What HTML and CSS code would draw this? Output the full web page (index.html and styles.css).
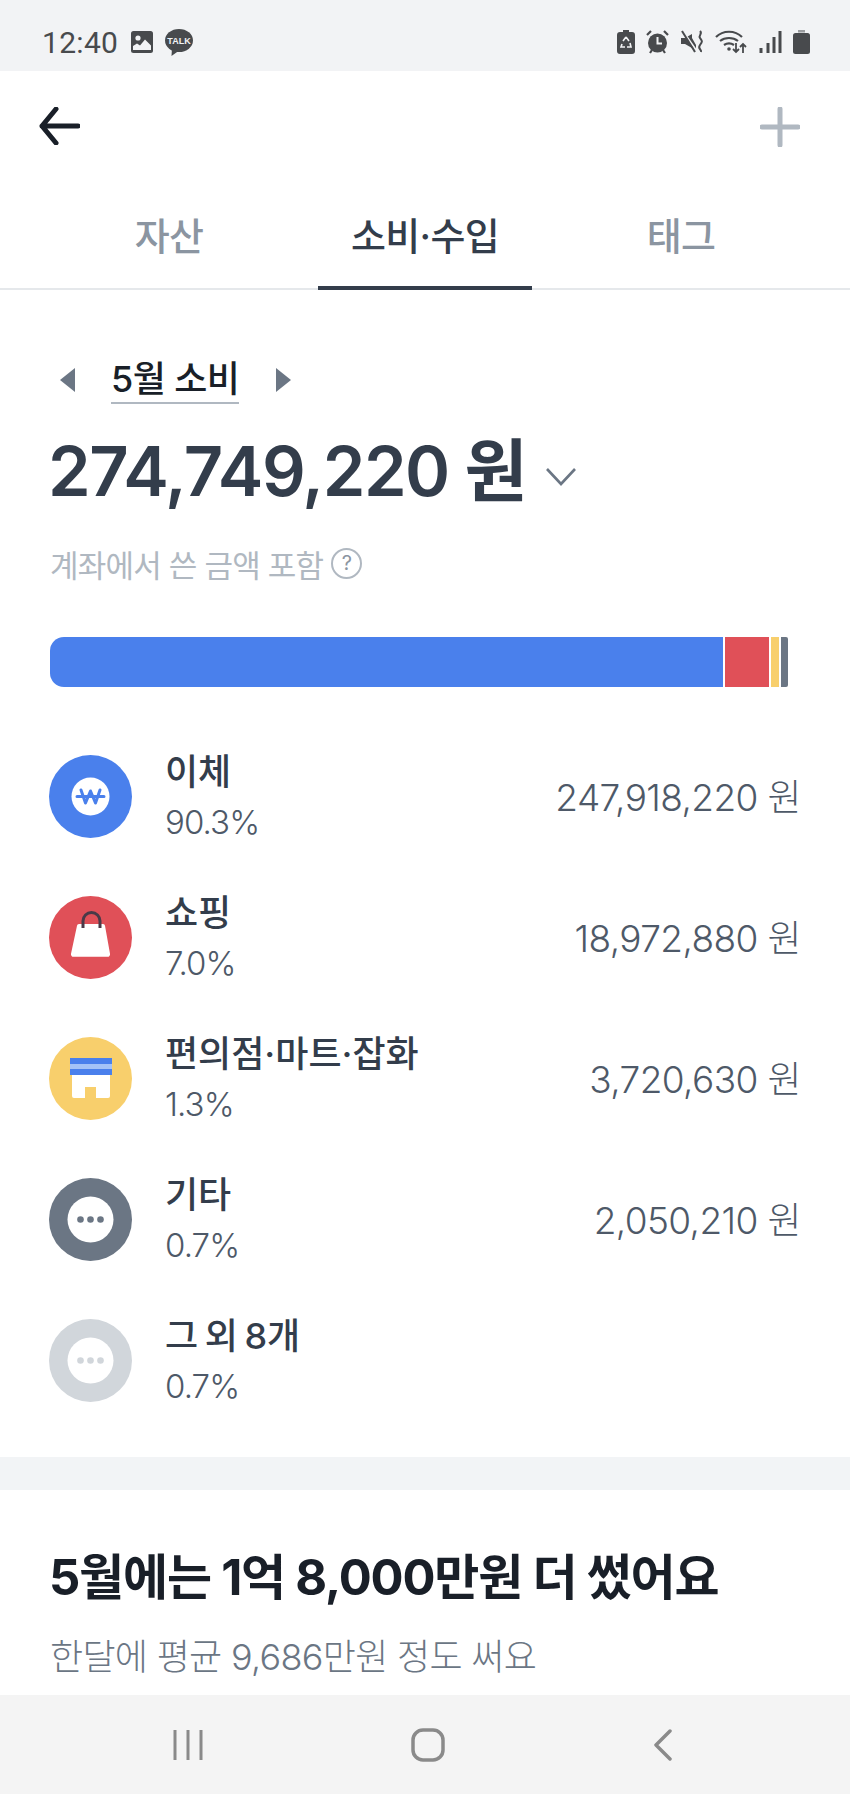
FILE: index.html
```html
<!DOCTYPE html>
<html lang="ko">
<head>
	<meta charset="UTF-8">
	<title>소비·수입</title>
	<link rel="stylesheet" href="styles.css">
</head>
<body>
	<div class="phone">
		<div class="status">
			<div class="status-left">
				<span class="clock">12:40</span>
				<svg class="ic-photo" width="22" height="22" viewBox="0 0 22 22">
					<rect width="22" height="22" rx="2.5" fill="#484a4d"/>
					<circle cx="7" cy="7" r="2.6" fill="#f2f3f5"/>
					<path d="M2 19v-4l4-2.500 3 2 5-6 6 6v4.500z" fill="#f2f3f5"/>
				</svg>
				<svg class="ic-talk" width="28" height="27" viewBox="0 0 28 27">
					<ellipse cx="14" cy="11.500" rx="14" ry="11.500" fill="#484a4d"/>
					<path d="M7 19l-.5 8 7-5z" fill="#484a4d"/>
					<text x="14" y="15" class="talk-text" text-anchor="middle">TALK</text>
				</svg>
			</div>
			<div class="status-right">
				<svg width="18" height="24" viewBox="0 0 18 24">
					<path d="M6 0h6v2h3a3 3 0 0 1 3 3v16a3 3 0 0 1-3 3H3a3 3 0 0 1-3-3V5a3 3 0 0 1 3-3h3z" fill="#484a4d"/>
					<path d="M9 7l3 4M9 7l-3 4M5 14l-1 3h4M13 13l1 4h-4" stroke="#f2f3f5" stroke-width="1.600" fill="none"/>
				</svg>
				<svg width="23" height="24" viewBox="0 0 23 24">
					<circle cx="11.500" cy="13" r="9.500" fill="#484a4d"/>
					<path d="M11.500 7v6.500h4.500" stroke="#f2f3f5" stroke-width="2" fill="none"/>
					<path d="M1 5l4-4M22 5l-4-4M4 23l2-3M19 23l-2-3" stroke="#484a4d" stroke-width="2.200"/>
				</svg>
				<svg width="23" height="24" viewBox="0 0 23 24">
					<path d="M0 8h4l7-4v4l4 7v5l-4-2-7-4H0z" fill="#484a4d"/>
					<path d="M1 0l14 20" stroke="#f2f3f5" stroke-width="2"/>
					<path d="M1 1l13 21" stroke="#484a4d" stroke-width="2"/>
					<path d="M19 1c3 3-2 4 0 7s3 3 0 7 2 4 1 7" stroke="#484a4d" stroke-width="2" fill="none"/>
				</svg>
				<svg width="32" height="24" viewBox="0 0 32 24">
					<path d="M1 7c7-7 19-7 26 0M5 11c5-4 13-4 18 0M9 15c3-2 7-2 10 0" stroke="#484a4d" stroke-width="2.200" fill="none"/>
					<circle cx="14" cy="19" r="1.800" fill="#484a4d"/>
					<path d="M21 13v9M18 19l3 3 3-3M28 23v-9M25 17l3-3 3 3" stroke="#484a4d" stroke-width="1.800" fill="none"/>
				</svg>
				<svg width="23" height="24" viewBox="0 0 23 24">
					<path d="M2 18v5M9 13v10M15 7v16M21 1v22" stroke="#484a4d" stroke-width="3"/>
				</svg>
				<svg width="17" height="24" viewBox="0 0 17 24">
					<path d="M5 0h7v2.500H5z" fill="#9a9c9f"/>
					<rect y="3" width="17" height="21" rx="2.500" fill="#484a4d"/>
				</svg>
			</div>
		</div>

		<div class="screen">
			<div class="toolbar">
				<svg class="ic-back" width="41" height="38" viewBox="0 0 41 38">
					<path d="M17 2L3 19l14 17M3 19h36" stroke="#191f28" stroke-width="5" stroke-linecap="round" stroke-linejoin="round" fill="none"/>
				</svg>
				<svg class="ic-plus" width="40" height="40" viewBox="0 0 40 40">
					<path d="M20 2v36M2 20h36" stroke="#b0b8c1" stroke-width="5" stroke-linecap="round"/>
				</svg>
			</div>
			<div class="tabs">
				<div class="tab">자산</div>
				<div class="tab active">소비·수입</div>
				<div class="tab">태그</div>
			</div>

			<div class="summary">
				<div class="month">
					<span class="tri tri-left"></span>
					<span class="month-name">5월 소비</span>
					<span class="tri tri-right"></span>
				</div>
				<div class="total">
					<span>274,749,220 원</span>
					<svg width="32" height="19" viewBox="0 0 32 19">
						<path d="M2 2l14 15L30 2" stroke="#6b7684" stroke-width="2.600" fill="none"/>
					</svg>
				</div>
				<div class="note">
					<span>계좌에서 쓴 금액 포함</span>
					<span class="help">?</span>
				</div>
				<div class="bar">
					<div class="seg seg-blue"></div>
					<div class="seg seg-red"></div>
					<div class="seg seg-yellow"></div>
					<div class="seg seg-gray"></div>
				</div>
			</div>

			<div class="list">
				<div class="row">
					<svg class="cat-icon" viewBox="0 0 83 83">
						<circle cx="41.500" cy="41.500" r="41.500" fill="#4a80ec"/>
						<circle cx="41.500" cy="41.500" r="19" fill="#fff"/>
						<path d="M28 41.500h27M32 35l4.500 13 5-12 5 12L51 35" stroke="#4a80ec" stroke-width="3" stroke-linecap="round" stroke-linejoin="round" fill="none"/>
					</svg>
					<div class="cat-text">
						<div class="cat-name">이체</div>
						<div class="cat-pct">90.3%</div>
					</div>
					<div class="cat-amount">247,918,220 원</div>
				</div>
				<div class="row">
					<svg class="cat-icon" viewBox="0 0 83 83">
						<circle cx="41.500" cy="41.500" r="41.500" fill="#e05058"/>
						<path d="M34 30v-5a8.500 8.500 0 0 1 17 0v5" stroke="#4a3a48" stroke-width="3" fill="none"/>
						<path d="M30 28h24a2 2 0 0 1 2 1.800l5 28a2.500 2.500 0 0 1-2.500 3H24.500a2.500 2.500 0 0 1-2.500-3l6-28a2 2 0 0 1 2-1.800z" fill="#fff"/>
						<path d="M34 28v4M51 28v4" stroke="#4a3a48" stroke-width="3"/>
					</svg>
					<div class="cat-text">
						<div class="cat-name">쇼핑</div>
						<div class="cat-pct">7.0%</div>
					</div>
					<div class="cat-amount">18,972,880 원</div>
				</div>
				<div class="row">
					<svg class="cat-icon" viewBox="0 0 83 83">
						<circle cx="41.500" cy="41.500" r="41.500" fill="#f8cf6c"/>
						<path d="M23 38h38v21a2 2 0 0 1-2 2H47V50H36v11H25a2 2 0 0 1-2-2z" fill="#fff"/>
						<rect x="21" y="21" width="42" height="17" fill="#4a80ec"/>
						<rect x="21" y="27" width="42" height="5" fill="#a5c3f7"/>
					</svg>
					<div class="cat-text">
						<div class="cat-name">편의점·마트·잡화</div>
						<div class="cat-pct">1.3%</div>
					</div>
					<div class="cat-amount">3,720,630 원</div>
				</div>
				<div class="row">
					<svg class="cat-icon" viewBox="0 0 83 83">
						<circle cx="41.500" cy="41.500" r="41.500" fill="#6b7684"/>
						<circle cx="41.500" cy="41.500" r="23" fill="#fff"/>
						<circle cx="31.500" cy="41.500" r="3.300" fill="#6b7684"/>
						<circle cx="41.500" cy="41.500" r="3.300" fill="#6b7684"/>
						<circle cx="51.500" cy="41.500" r="3.300" fill="#6b7684"/>
					</svg>
					<div class="cat-text">
						<div class="cat-name">기타</div>
						<div class="cat-pct">0.7%</div>
					</div>
					<div class="cat-amount">2,050,210 원</div>
				</div>
				<div class="row">
					<svg class="cat-icon" viewBox="0 0 83 83">
						<circle cx="41.500" cy="41.500" r="41.500" fill="#d1d6db"/>
						<circle cx="41.500" cy="41.500" r="23" fill="#fff"/>
						<circle cx="31.500" cy="41.500" r="3.300" fill="#d1d6db"/>
						<circle cx="41.500" cy="41.500" r="3.300" fill="#d1d6db"/>
						<circle cx="51.500" cy="41.500" r="3.300" fill="#d1d6db"/>
					</svg>
					<div class="cat-text">
						<div class="cat-name">그 외 8개</div>
						<div class="cat-pct">0.7%</div>
					</div>
				</div>
			</div>

			<div class="divider"></div>

			<div class="compare">
				<h2>5월에는 1억 8,000만원 더 썼어요</h2>
				<p>한달에 평균 9,686만원 정도 써요</p>
			</div>
		</div>

		<div class="navbar">
			<svg width="30" height="30" viewBox="0 0 30 30">
				<path d="M2 0v30M15 0v30M28 0v30" stroke="#8a8a8a" stroke-width="3"/>
			</svg>
			<svg width="34" height="34" viewBox="0 0 34 34">
				<rect x="2" y="2" width="30" height="30" rx="10" stroke="#8a8a8a" stroke-width="3.500" fill="none"/>
			</svg>
			<svg width="20" height="32" viewBox="0 0 20 32">
				<path d="M17 2L3 16l14 14" stroke="#8a8a8a" stroke-width="3.500" stroke-linecap="round" stroke-linejoin="round" fill="none"/>
			</svg>
		</div>
	</div>
</body>
</html>
```

FILE: styles.css
```css
* {
	box-sizing: border-box;
}

html, body {
	margin: 0;
	padding: 0;
	background-color: #ffffff;
}

body {
	font-family: Inter, "Noto Sans CJK KR", sans-serif;
	color: #333d4b;
}

.phone {
	width: 850px;
	height: 1794px;
	display: flex;
	flex-direction: column;
	overflow: hidden;
}

/* status bar */
.status {
	height: 71px;
	flex: none;
	background-color: #f2f3f5;
	padding: 13px 40px 0 42px;
	display: flex;
	justify-content: space-between;
	align-items: center;
}

.status-left, .status-right {
	display: flex;
	align-items: center;
}

.status-left svg, .status-right svg {
	display: block;
}

.clock {
	font-family: Roboto, sans-serif;
	font-size: 30px;
	color: #484a4d;
	width: 89px;
	letter-spacing: 0.3px;
}

.ic-talk {
	margin-left: 12px;
}

.talk-text {
	font-family: "Liberation Sans", sans-serif;
	font-size: 9px;
	font-weight: 700;
	fill: #f2f3f5;
}

.status-right {
	gap: 11.500px;
}

/* top of the screen */
.screen {
	flex: 1;
	overflow: hidden;
}

.toolbar {
	height: 119px;
	padding: 36px 50px 0 39px;
	display: flex;
	justify-content: space-between;
	align-items: flex-start;
}

.tabs {
	height: 100px;
	display: flex;
	justify-content: center;
	gap: 0;
	border-bottom: 2px solid #e5e8eb;
	padding: 0 41px;
}

.tab {
	width: 256px;
	flex: none;
	font-size: 38px;
	font-weight: 500;
	letter-spacing: -0.7px;
	line-height: 52px;
	padding-top: 20px;
	text-align: center;
	color: #8b95a1;
	position: relative;
}

.tab.active {
	color: #333d4b;
}

.tab.active::after {
	content: "";
	position: absolute;
	left: 21px;
	right: 21px;
	bottom: -2px;
	height: 4px;
	background-color: #333d4b;
}

/* month total */
.summary {
	padding: 0 50px;
}

.month {
	margin-top: 68px;
	height: 47px;
	display: flex;
	align-items: flex-start;
	padding-left: 10px;
}

.tri {
	width: 0;
	height: 0;
	margin-top: 10px;
	border-top: 12px solid transparent;
	border-bottom: 12px solid transparent;
}

.tri-left {
	border-right: 15px solid #6b7684;
}

.tri-right {
	border-left: 15px solid #6b7684;
}

.month-name {
	margin: 0 37px 0 36px;
	height: 46px;
	font-size: 36px;
	font-weight: 500;
	line-height: 42px;
	letter-spacing: -0.6px;
	color: #191f28;
	border-bottom: 2px solid #b0b8c1;
	white-space: nowrap;
}

.total {
	margin-top: 28px;
	margin-left: -2px;
	height: 78px;
	display: flex;
	align-items: center;
	font-size: 68.500px;
	font-weight: 600;
	line-height: 78px;
	letter-spacing: -1.5px;
	white-space: nowrap;
}

.total svg {
	margin-left: 19px;
	margin-top: 8px;
}

.note {
	margin-top: 32px;
	height: 40px;
	display: flex;
	align-items: center;
	gap: 8px;
	font-size: 31px;
	letter-spacing: -0.8px;
	color: #b0b8c1;
	white-space: nowrap;
}

.help {
	width: 31px;
	height: 31px;
	border: 2px solid #b0b8c1;
	border-radius: 50%;
	font-size: 20px;
	line-height: 27px;
	text-align: center;
	letter-spacing: 0;
	color: #8b95a1;
}

.bar {
	margin-top: 54px;
	width: 738px;
	height: 50px;
	display: flex;
	gap: 2px;
}

.seg {
	height: 100%;
}

.seg-blue {
	width: 673px;
	background-color: #4a80ec;
	border-radius: 14px 0 0 14px;
}

.seg-red {
	width: 44px;
	background-color: #e05058;
}

.seg-yellow {
	width: 8px;
	background-color: #f8cf6c;
}

.seg-gray {
	width: 7px;
	background-color: #6b7684;
	border-radius: 0 2px 2px 0;
}

/* categories */
.list {
	margin-top: 68px;
	padding: 0 49px 0 49px;
	display: flex;
	flex-direction: column;
	gap: 58px;
}

.row {
	height: 83px;
	display: flex;
	align-items: center;
}

.cat-icon {
	width: 83px;
	height: 83px;
	flex: none;
}

.cat-text {
	margin-left: 33px;
	flex: 1;
}

.cat-name {
	font-size: 36px;
	font-weight: 500;
	line-height: 50px;
	word-spacing: -3px;
	margin-top: -3px;
	margin-bottom: -3px;
}

.cat-pct {
	font-size: 33px;
	font-weight: 300;
	line-height: 42px;
	margin-top: 7px;
	letter-spacing: -0.9px;
	color: #4e5968;
}

.cat-amount {
	font-size: 37px;
	font-weight: 300;
	letter-spacing: -0.6px;
	color: #4e5968;
	white-space: nowrap;
	margin-top: -4px;
}

.divider {
	margin-top: 55px;
	height: 33px;
	background-color: #f2f4f6;
}

.compare {
	padding: 56px 50px 0;
}

.compare h2 {
	margin: 0 0 0 -1px;
	font-size: 49px;
	font-weight: 700;
	line-height: 64px;
	letter-spacing: -1.2px;
	color: #191f28;
	white-space: nowrap;
}

.compare p {
	margin: 24px 0 0;
	font-size: 36px;
	line-height: 46px;
	font-weight: 300;
	letter-spacing: -0.7px;
	color: #6b7684;
	white-space: nowrap;
}

/* system buttons */
.navbar {
	height: 99px;
	flex: none;
	background-color: #f4f4f4;
	display: flex;
	align-items: center;
	justify-content: space-between;
	padding: 0 177px 0 173px;
}
```
